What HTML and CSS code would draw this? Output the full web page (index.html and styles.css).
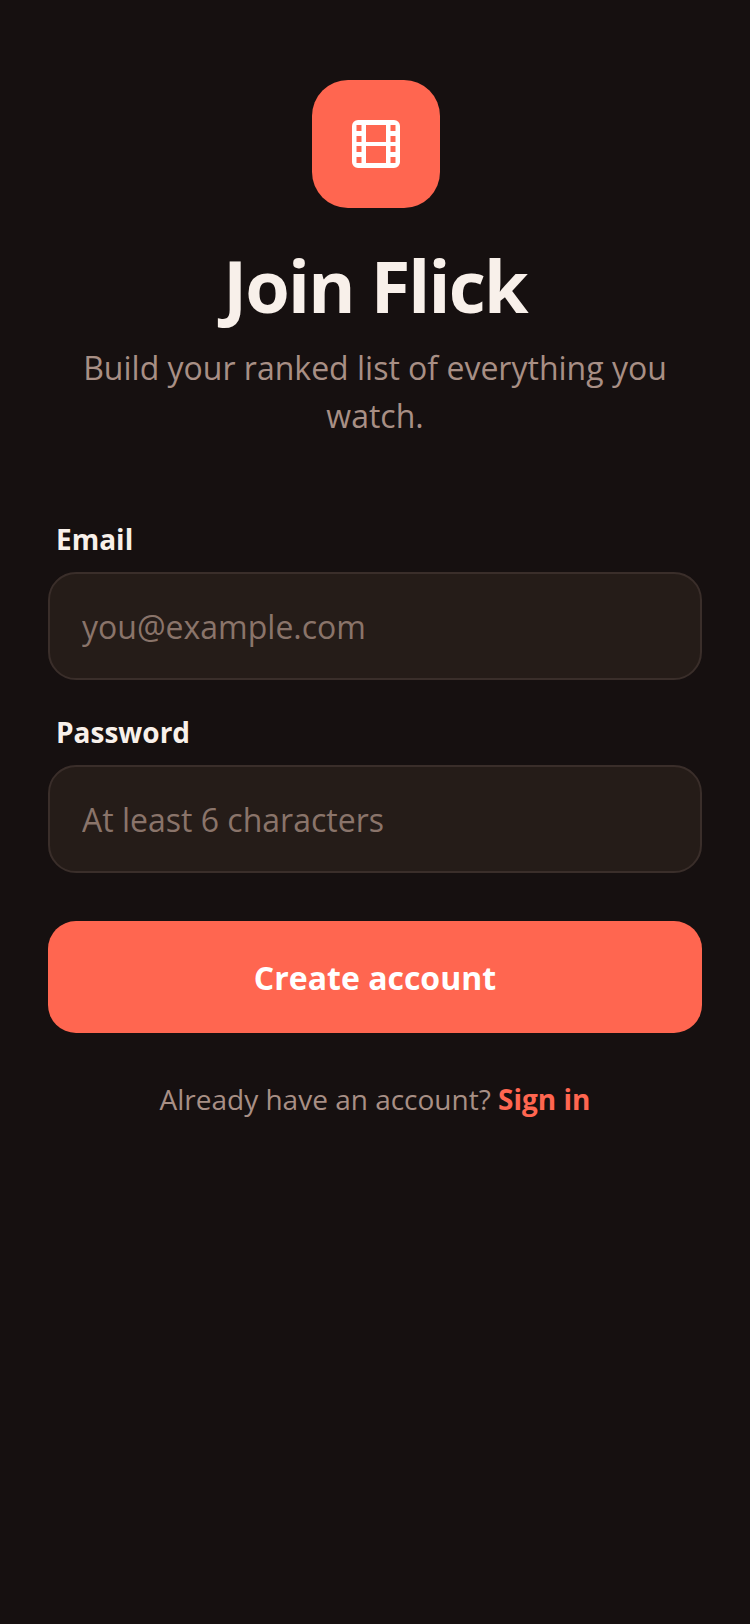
FILE: index.html
```html
<!DOCTYPE html>
<html lang="en">

<head>
    <meta charset="UTF-8">
    <title>Join Flick</title>
    <link rel="stylesheet" href="styles.css">
</head>

<body>
    <main class="signup">
        <header class="intro">
            <div class="logo">
                <svg class="logo-icon" viewBox="0 0 48 48" width="48" height="48">
                    <path fill="#fff" fill-rule="evenodd" d="M6 0H42A6 6 0 0 1 48 6V42A6 6 0 0 1 42 48H6A6 6 0 0 1 0 42V6A6 6 0 0 1 6 0ZM14 5V22H34V5ZM14 26V43H34V26ZM4.500 5V11H9.500V5ZM38.500 5V11H43.500V5ZM4.500 16V22H9.500V16ZM38.500 16V22H43.500V16ZM4.500 26V32H9.500V26ZM38.500 26V32H43.500V26ZM4.500 37V43H9.500V37ZM38.500 37V43H43.500V37Z"/>
                </svg>
            </div>
            <h1>Join Flick</h1>
            <p class="tagline">Build your ranked list of everything you watch.</p>
        </header>
        <form class="form">
            <label class="field">
                <span class="field-label">Email</span>
                <input class="field-input" type="text" placeholder="you@example.com">
            </label>
            <label class="field">
                <span class="field-label">Password</span>
                <input class="field-input" type="text" placeholder="At least 6 characters">
            </label>
            <button class="submit" type="button">Create account</button>
        </form>
        <p class="switch">Already have an account? <a class="switch-link" href="#">Sign in</a></p>
    </main>
</body>

</html>
```

FILE: styles.css
```css
* {
    box-sizing: border-box;
}

body {
    margin: 0;
    min-height: 1624px;
    background-color: #161010;
    font-family: "Open Sans", sans-serif;
}

.signup {
    display: flex;
    flex-direction: column;
    padding: 80px 48px 0;
}

.intro {
    display: flex;
    flex-direction: column;
    align-items: center;
    text-align: center;
}

.logo {
    display: flex;
    justify-content: center;
    align-items: center;
    width: 128px;
    height: 128px;
    margin-left: 1px;
    border-radius: 36px;
    background-color: #ff6650;
}

h1 {
    margin: 33px 0 0;
    font-size: 72px;
    line-height: 88px;
    font-weight: 700;
    letter-spacing: -1.8px;
    color: #f8f0ea;
}

.tagline {
    margin: 15px 0 0;
    padding: 0 24px;
    font-size: 32px;
    line-height: 48px;
    color: #a88f85;
}

.form {
    display: flex;
    flex-direction: column;
    margin-top: 79px;
}

.field {
    display: flex;
    flex-direction: column;
    margin-bottom: 32px;
}

.field-label {
    margin: 0 0 13px 8px;
    font-size: 28px;
    line-height: 40px;
    font-weight: 700;
    color: #f8f0ea;
}

.field-input {
    height: 108px;
    padding: 0 32px;
    border: 2px solid #3a2e2a;
    border-radius: 28px;
    background-color: #251c18;
    font-family: inherit;
    font-size: 32px;
}

.field-input::placeholder {
    color: #8a746a;
    opacity: 1;
}

.submit {
    height: 112px;
    margin-top: 16px;
    border: none;
    border-radius: 28px;
    background-color: #ff6650;
    color: #fff;
    font-family: inherit;
    font-size: 32px;
    font-weight: 700;
}

.switch {
    margin: 44px 0 0;
    text-align: center;
    font-size: 28px;
    line-height: 44px;
    color: #a88f85;
}

.switch-link {
    font-weight: 700;
    color: #ff6650;
    text-decoration: none;
}
```
